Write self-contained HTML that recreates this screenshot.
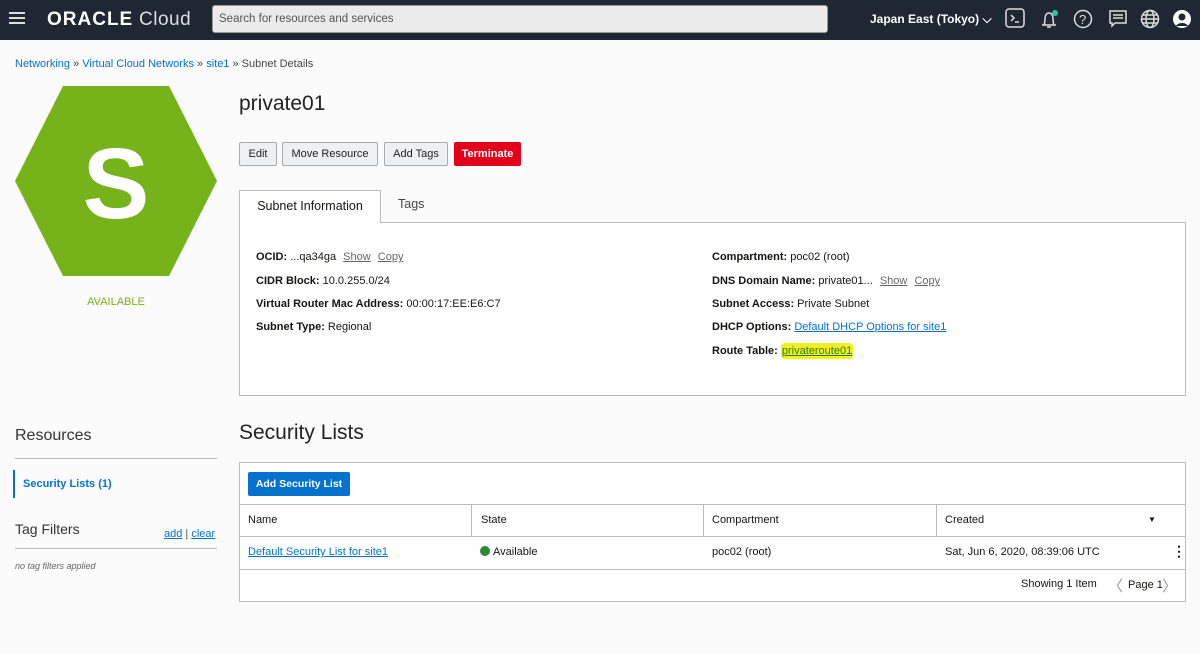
<!DOCTYPE html>
<html><head><meta charset="utf-8"><style>
*{box-sizing:border-box;margin:0;padding:0}
body{width:1200px;height:654px;background:#fbfbfb;font-family:"Liberation Sans",sans-serif;font-size:12px;color:#161513;position:relative;overflow:hidden}
.abs{position:absolute}
a{color:#0572ce;text-decoration:underline}
.hdr{left:0;top:0;width:1200px;height:40px;background:#1f2733}
.btn{position:absolute;top:142px;height:24px;border:1px solid #aaa;background:#eef0f2;border-radius:2px;font-size:11px;line-height:22px;text-align:center;color:#222;white-space:nowrap}
.lbl{font-weight:bold}
.row{position:absolute;font-size:11px;white-space:nowrap}
.ul{text-decoration:underline;color:#666;margin-left:4px}
</style></head><body>
<div class="abs hdr"></div>
<div class="abs" style="left:9px;top:12px;width:16px;height:2px;background:#ddd;box-shadow:0 5px 0 #ddd,0 10px 0 #ddd"></div>
<div class="abs" style="left:47px;top:9px;color:#fff;font-size:19px;letter-spacing:0.5px"><b style="font-weight:bold;letter-spacing:1px">ORACLE</b> <span style="font-weight:normal;color:#ddd">Cloud</span></div>
<div class="abs" style="left:212px;top:5px;width:616px;height:28px;background:#ebebeb;border-radius:3px;border:1px solid #999;color:#555;font-size:11.5px;line-height:26px;padding-left:6px">Search for resources and services</div>
<div class="abs" style="left:870px;top:12px;color:#fff;font-size:12px;font-weight:bold">Japan East (Tokyo) ⌵</div>
<svg class="abs" style="left:1000px;top:6px" width="200" height="28" fill="none" stroke="#ddd" stroke-width="1.5">
<rect x="6" y="3" width="18" height="18" rx="3"/><path d="M11 9l3 3-3 3M15 16h4"/>
<path d="M42 19h14M44 19c1-2 1-5 1-7 0-3 2-5 4-5s4 2 4 5c0 2 0 5 1 7M47 21h4"/><circle cx="55" cy="7" r="3" fill="#2ec4a0" stroke="none"/>
<circle cx="83" cy="13" r="8.5"/><text x="79" y="18" fill="#ddd" stroke="none" font-size="13" font-family="Liberation Sans">?</text>
<path d="M110 5h16v12h-11l-3 3v-3h-2z M113 9h10M113 12h10"/>
<circle cx="150" cy="13" r="8.5"/><ellipse cx="150" cy="13" rx="4" ry="8.5"/><path d="M141.5 13h17M143 9h14M143 17h14"/>
<circle cx="182" cy="13" r="9" fill="#fff" stroke="none"/><circle cx="182" cy="11" r="3.5" fill="#1f2733" stroke="none"/><path d="M176 20c2-4 10-4 12 0" fill="#1f2733" stroke="none"/>
</svg>
<div class="abs" style="left:15px;top:58px;font-size:11px;color:#444"><a style="text-decoration:none">Networking</a> » <a style="text-decoration:none">Virtual Cloud Networks</a> » <a style="text-decoration:none">site1</a> » Subnet Details</div>
<svg class="abs" style="left:15px;top:86px" width="202" height="190"><polygon points="0,95 48,0 154,0 202,95 154,190 48,190" fill="#76b31b"/><text x="101" y="132" text-anchor="middle" fill="#fff" font-size="100" font-weight="bold" font-family="Liberation Sans">S</text></svg>
<div class="abs" style="left:0;top:296px;width:232px;text-align:center;color:#76b31b;font-size:11px">AVAILABLE</div>
<div class="abs" style="left:239px;top:92px;font-size:21px;color:#222">private01</div>
<div class="btn" style="left:239px;width:38px">Edit</div>
<div class="btn" style="left:282px;width:96px">Move Resource</div>
<div class="btn" style="left:384px;width:64px">Add Tags</div>
<div class="btn" style="left:454px;width:67px;background:#e3001b;border-color:#e3001b;color:#fff;font-weight:bold">Terminate</div>
<div class="abs" style="left:239px;top:222px;width:947px;height:174px;border:1px solid #bbb;background:#fff"></div>
<div class="abs" style="left:239px;top:190px;width:142px;height:33px;border:1px solid #bbb;border-bottom:none;background:#fff;font-size:12.5px;line-height:30px;text-align:center">Subnet Information</div>
<div class="abs" style="left:398px;top:197px;font-size:12.5px;color:#444">Tags</div>
<div class="row" style="left:256px;top:251px"><span class="lbl">OCID:</span> ...qa34ga <span class="ul">Show</span> <span class="ul">Copy</span></div>
<div class="row" style="left:256px;top:275px"><span class="lbl">CIDR Block:</span> 10.0.255.0/24</div>
<div class="row" style="left:256px;top:298px"><span class="lbl">Virtual Router Mac Address:</span> 00:00:17:EE:E6:C7</div>
<div class="row" style="left:256px;top:321px"><span class="lbl">Subnet Type:</span> Regional</div>
<div class="row" style="left:712px;top:251px"><span class="lbl">Compartment:</span> poc02 (root)</div>
<div class="row" style="left:712px;top:275px"><span class="lbl">DNS Domain Name:</span> private01... <span class="ul">Show</span> <span class="ul">Copy</span></div>
<div class="row" style="left:712px;top:298px"><span class="lbl">Subnet Access:</span> Private Subnet</div>
<div class="row" style="left:712px;top:321px"><span class="lbl">DHCP Options:</span> <a>Default DHCP Options for site1</a></div>
<div class="row" style="left:712px;top:345px"><span class="lbl">Route Table:</span> <a style="background:#f0f020;color:#2a7a20;padding:2px 1px;border-radius:4px">privateroute01</a></div>
<div class="abs" style="left:15px;top:427px;font-size:16px;color:#333">Resources</div>
<div class="abs" style="left:15px;top:458px;width:202px;border-top:1px solid #bbb"></div>
<div class="abs" style="left:13px;top:470px;border-left:2px solid #0572ce;height:28px;padding-left:8px;line-height:28px;color:#0572ce;font-weight:bold;font-size:11px">Security Lists (1)</div>
<div class="abs" style="left:15px;top:521px;font-size:14px;color:#333">Tag Filters</div>
<div class="abs" style="left:164px;top:528px;font-size:11px;color:#555"><a>add</a> | <a>clear</a></div>
<div class="abs" style="left:15px;top:548px;width:202px;border-top:1px solid #bbb"></div>
<div class="abs" style="left:15px;top:561px;font-size:9px;font-style:italic;color:#666">no tag filters applied</div>
<div class="abs" style="left:239px;top:421px;font-size:21px;color:#222">Security Lists</div>
<div class="abs" style="left:239px;top:462px;width:947px;height:140px;border:1px solid #bbb;background:#fff"></div>
<div class="abs" style="left:248px;top:472px;width:102px;height:24px;background:#0572ce;border-radius:2px;color:#fff;font-weight:bold;font-size:10.5px;line-height:24px;text-align:center;white-space:nowrap">Add Security List</div>
<div class="abs" style="left:240px;top:504px;width:945px;height:33px;border-top:1px solid #bbb;border-bottom:1px solid #bbb"></div>
<div class="abs" style="left:240px;top:569px;width:945px;border-top:1px solid #bbb"></div>
<div class="abs" style="left:471px;top:504px;height:33px;border-left:1px solid #bbb"></div>
<div class="abs" style="left:703px;top:504px;height:33px;border-left:1px solid #bbb"></div>
<div class="abs" style="left:936px;top:504px;height:33px;border-left:1px solid #bbb"></div>
<div class="row" style="left:248px;top:514px">Name</div>
<div class="row" style="left:481px;top:514px">State</div>
<div class="row" style="left:712px;top:514px">Compartment</div>
<div class="row" style="left:945px;top:514px">Created</div>
<div class="row" style="left:1148px;top:515px;font-size:8px">▼</div>
<div class="row" style="left:248px;top:546px"><a>Default Security List for site1</a></div>
<div class="row" style="left:480px;top:546px"><span style="display:inline-block;width:10px;height:10px;border-radius:5px;background:#2d8a36;vertical-align:-1px;margin-right:3px"></span>Available</div>
<div class="row" style="left:712px;top:546px">poc02 (root)</div>
<div class="row" style="left:945px;top:546px">Sat, Jun 6, 2020, 08:39:06 UTC</div>
<div class="row" style="left:1172px;top:543px;font-weight:bold;font-size:14px">⋮</div>
<div class="row" style="left:1021px;top:578px">Showing 1 Item</div>
<div class="row" style="left:1108px;top:575px;color:#999;font-size:15px">〈</div>
<div class="row" style="left:1128px;top:579px">Page 1</div>
<div class="row" style="left:1162px;top:575px;color:#999;font-size:15px">〉</div>
</body></html>
